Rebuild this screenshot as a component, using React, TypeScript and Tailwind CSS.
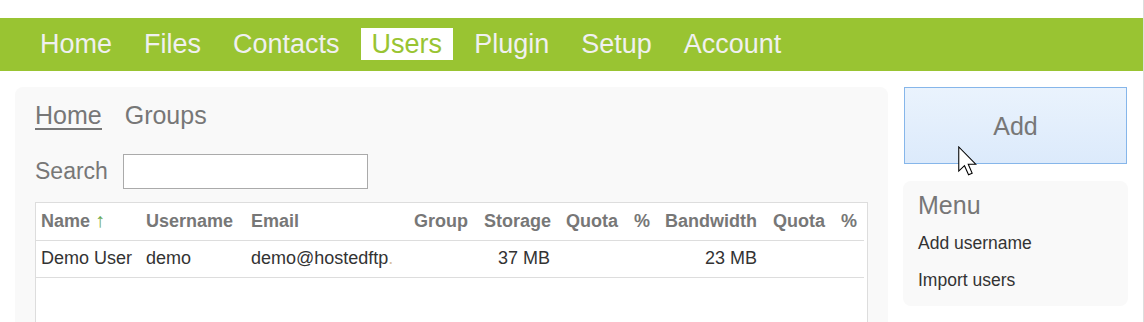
import React from "react";

const navItems = ["Home", "Files", "Contacts", "Users", "Plugin", "Setup", "Account"];

function Cursor() {
  return (
    <svg
      className="absolute left-[958px] top-[146px]"
      width="19"
      height="30"
      viewBox="0 0 12.6 19.6"
    >
      <polygon
        points="0.5,0.5 0.5,16.5 4.3,12.9 7,18.9 9.4,17.9 6.8,12 11.9,12"
        fill="#ffffff"
        stroke="#000000"
        strokeWidth="0.7"
        strokeLinejoin="miter"
      />
    </svg>
  );
}

export default function App() {
  const th = "h-[37px] px-2 text-[18px] font-bold text-[#777] whitespace-nowrap";
  const td = "h-[37px] px-2 text-[18px] text-[#333] whitespace-nowrap";
  return (
    <div className="relative w-[1144px] h-[322px] overflow-hidden bg-white border-r border-[#dddddd] font-['Liberation_Sans',Arial,sans-serif]">
      <div className="pt-[18px]">
        <nav className="h-[53px] bg-[#99c432] flex items-start pt-[10px] pl-[29px] gap-[10px]">
          {navItems.map((n) => (
            <div
              key={n}
              className={
                "h-[32px] px-[11px] leading-[33px] text-[27px] whitespace-nowrap " +
                (n === "Users" ? "bg-white text-[#99c432]" : "text-[#f0f0f0]")
              }
            >
              {n}
            </div>
          ))}
        </nav>
      </div>

      <div className="flex px-[15px] pt-[16px] gap-[15px]">
        <div className="w-[873px] h-[280px] rounded-[8px] bg-[#f9f9f9] px-[20px] pt-[16px]">
          <div className="flex gap-[23px]">
            <div className="text-[25px] leading-[25px] text-[#777] border-b-2 border-[#777]">Home</div>
            <div className="text-[25px] leading-[25px] text-[#777] border-b-2 border-transparent">Groups</div>
          </div>
          <div className="mt-[24px] flex items-center gap-[15px]">
            <span className="text-[23px] text-[#777]">Search</span>
            <input className="w-[245px] h-[35px] border border-[#aaaaaa] bg-white outline-none" />
          </div>
          <div className="mt-[13px] w-[833px] h-[220px] border border-[#dddddd] bg-white">
            <table className="table-fixed w-[828px] border-collapse">
              <colgroup>
                <col className="w-[102px]" />
                <col className="w-[105px]" />
                <col className="w-[155px]" />
                <col className="w-[78px]" />
                <col className="w-[82px]" />
                <col className="w-[68px]" />
                <col className="w-[31px]" />
                <col className="w-[108px]" />
                <col className="w-[68px]" />
                <col className="w-[31px]" />
              </colgroup>
              <thead>
                <tr className="border-b border-[#dddddd]">
                  <th className={th + " text-left !pl-[5px]"}>
                    Name <span className="font-normal text-[20px] leading-[18px] text-[#6aa84f]">↑</span>
                  </th>
                  <th className={th + " text-left"}>Username</th>
                  <th className={th + " text-left"}>Email</th>
                  <th className={th + " text-right"}>Group</th>
                  <th className={th + " text-right"}>Storage</th>
                  <th className={th + " text-right"}>Quota</th>
                  <th className={th + " text-right"}>%</th>
                  <th className={th + " text-right"}>Bandwidth</th>
                  <th className={th + " text-right"}>Quota</th>
                  <th className={th + " text-right"}>%</th>
                </tr>
              </thead>
              <tbody>
                <tr className="border-b border-[#dddddd]">
                  <td className={td + " !pl-[5px]"}>Demo User</td>
                  <td className={td}>demo</td>
                  <td className={td + " overflow-hidden"}>
                    demo@hostedftp<span className="text-[#d9c2a0]">.</span>
                  </td>
                  <td className={td}></td>
                  <td className={td + " text-right"}>37 MB</td>
                  <td className={td}></td>
                  <td className={td}></td>
                  <td className={td + " text-right"}>23 MB</td>
                  <td className={td}></td>
                  <td className={td}></td>
                </tr>
              </tbody>
            </table>
          </div>
        </div>

        <div className="w-[225px] flex flex-col">
          <button className="ml-[1px] w-[223px] h-[77px] border border-[#86b6ea] bg-gradient-to-b from-[#eaf3fd] to-[#dceafb] text-[25px] text-[#777] flex items-center justify-center pt-[2px]">
            Add
          </button>
          <div className="mt-[17px] h-[125px] rounded-[8px] bg-[#f9f9f9] px-[15px] pt-[12px]">
            <div className="text-[25px] leading-[25px] text-[#777]">Menu</div>
            <div className="mt-[7px] text-[17.5px] leading-[37px] text-[#333]">Add username</div>
            <div className="text-[17.5px] leading-[37px] text-[#333]">Import users</div>
          </div>
        </div>
      </div>

      <Cursor />
    </div>
  );
}
